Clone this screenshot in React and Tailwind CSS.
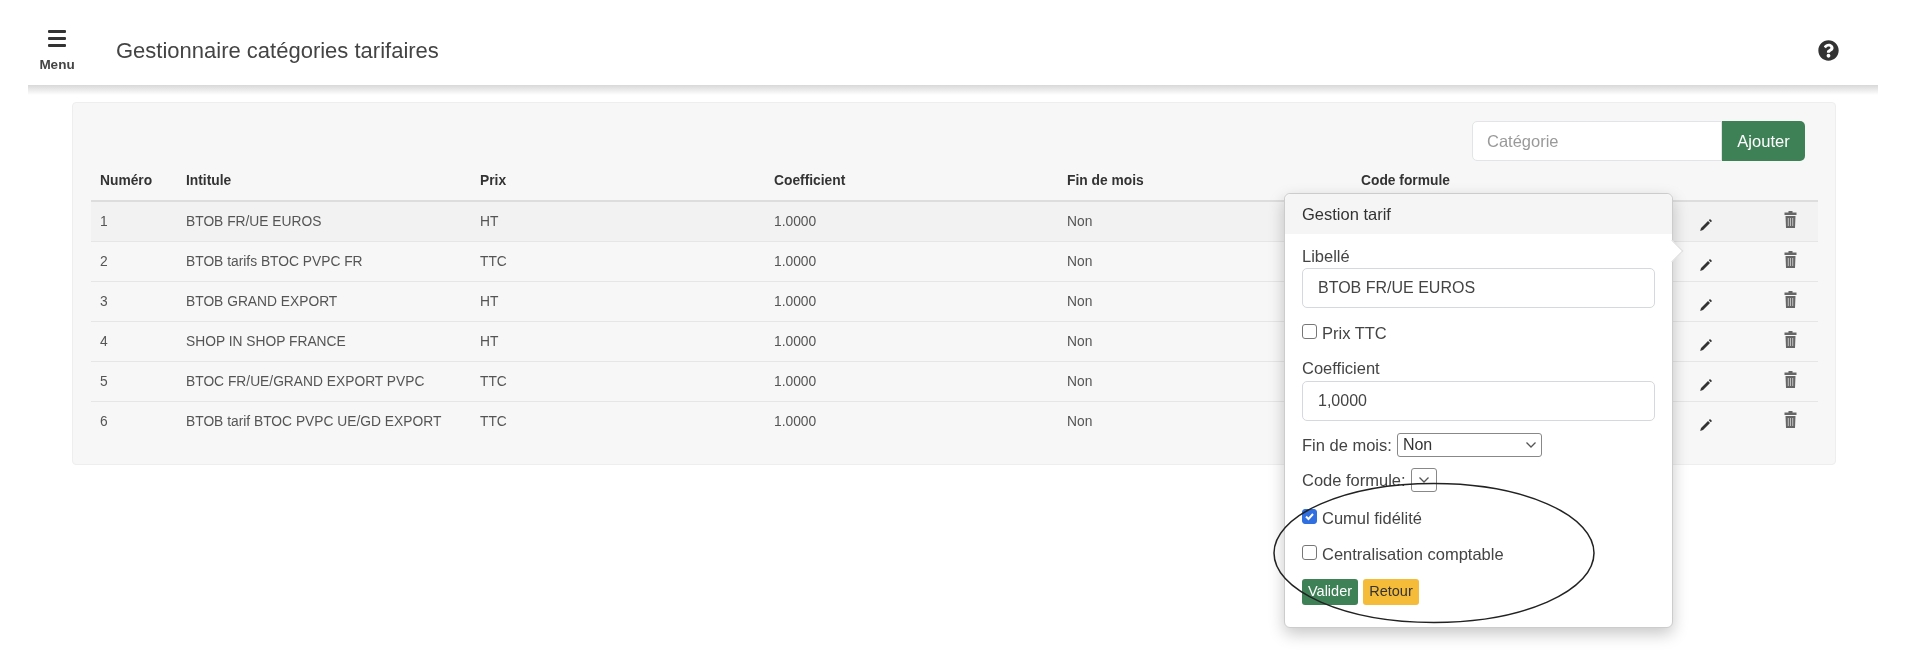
import { FaQuestionCircle } from 'react-icons/fa'

const ROWS = [
  { id: 1, name: 'BTOB FR/UE EUROS', price: 'HT' },
  { id: 2, name: 'BTOB tarifs BTOC PVPC FR', price: 'TTC' },
  { id: 3, name: 'BTOB GRAND EXPORT', price: 'HT' },
  { id: 4, name: 'SHOP IN SHOP FRANCE', price: 'HT' },
  { id: 5, name: 'BTOC FR/UE/GRAND EXPORT PVPC', price: 'TTC' },
  { id: 6, name: 'BTOB tarif BTOC PVPC UE/GD EXPORT', price: 'TTC' },
]

function MenuIcon() {
  return (
    <svg width="18" height="17" viewBox="0 0 18 17" fill="#333">
      <rect x="0" y="0" width="18" height="3" rx="1" />
      <rect x="0" y="7" width="18" height="3" rx="1" />
      <rect x="0" y="14" width="18" height="3" rx="1" />
    </svg>
  )
}

function PencilIcon() {
  return (
    <svg width="14" height="14" viewBox="0 0 14 14" className="inline-block mt-[7px]">
      <path d="M11 1l2 2-1.200 1.200-2-2zM9 2.900l2 2-7 7-2.800 1 .8-3z" fill="#333" />
    </svg>
  )
}

function TrashIcon() {
  return (
    <svg width="13" height="17" viewBox="0 0 13 17" className="inline-block -mt-[3px]">
      <path d="M4.500 0h4v1.500h4V4H.5V1.500h4zM1.500 5h10l-.5 12H2z" fill="#666" />
      <path d="M4.300 7v8M6.500 7v8M8.700 7v8" stroke="#ccc" strokeWidth="0.900" />
    </svg>
  )
}

function Chevron() {
  return (
    <svg width="12" height="8" viewBox="0 0 12 8" fill="none">
      <path d="M1.500 1.500L6 6l4.500-4.500" stroke="#555" strokeWidth="1.300" />
    </svg>
  )
}

function Checkbox({ checked }) {
  return (
    <span className={`-mt-[4px] w-[15px] h-[15px] rounded-[3px] border flex items-center justify-center shrink-0 ${checked ? 'bg-[#2f6fe0] border-[#2f6fe0]' : 'bg-white border-[#777]'}`}>
      {checked && (
        <svg width="11" height="11" viewBox="0 0 11 11" fill="none">
          <path d="M2 5.500l2.500 2.500L9 3" stroke="#fff" strokeWidth="2" />
        </svg>
      )}
    </span>
  )
}

function Popover() {
  return (
    <div className="absolute left-[1284px] top-[193px] w-[389px] h-[435px] bg-white rounded-[6px] border border-[#ccc] shadow-[0_6px_16px_rgba(0,0,0,0.22)] text-[16.500px] text-[#444]">
      <div className="h-[40px] px-[17px] flex items-center bg-[#f5f5f5] rounded-t-[6px] text-[#333]">Gestion tarif</div>
      <span className="absolute -right-[8px] top-[49px] w-[16px] h-[16px] rotate-45 bg-white border-t border-r border-[#ddd]" />
      <div className="relative px-[17px] flex flex-col">
        <label className="mt-[12px] leading-[20px]">Libellé</label>
        <div className="mt-[2px] h-[40px] rounded-[5px] border border-[#d5d8dc] flex items-center pl-[15px] text-[16px] text-[#444]">BTOB FR/UE EUROS</div>
        <div className="mt-[17px] flex items-center gap-[5px] h-[16px]"><Checkbox /><span>Prix TTC</span></div>
        <label className="mt-[17px] leading-[20px]">Coefficient</label>
        <div className="mt-[3px] h-[40px] rounded-[5px] border border-[#d5d8dc] flex items-center pl-[15px] text-[16px]">1,0000</div>
        <div className="mt-[12px] flex items-center gap-[5px] h-[24px]">
          <span>Fin de mois:</span>
          <div className="w-[145px] h-[24px] rounded-[3px] border border-[#888] flex items-center justify-between pl-[5px] pr-[4px] text-[16px] text-[#333]">Non<Chevron /></div>
        </div>
        <div className="mt-[11px] flex items-center gap-[5px] h-[24px]">
          <span>Code formule:</span>
          <div className="w-[26px] h-[24px] rounded-[3px] border border-[#888] flex items-center justify-center"><Chevron /></div>
        </div>
        <div className="mt-[18px] flex items-center gap-[5px] h-[16px]"><Checkbox checked /><span>Cumul fidélité</span></div>
        <div className="mt-[20px] flex items-center gap-[5px] h-[16px]"><Checkbox /><span>Centralisation comptable</span></div>
        <div className="mt-[17px] flex gap-[5px] text-[14.500px]">
          <button className="w-[56px] h-[26px] rounded-[3px] bg-[#3f8157] text-white">Valider</button>
          <button className="w-[56px] h-[26px] rounded-[3px] bg-[#f5bc3a] text-[#333]">Retour</button>
        </div>
      </div>
    </div>
  )
}

export default function App() {
  return (
    <div className="relative h-[668px] overflow-hidden bg-white font-['Liberation_Sans',Arial,sans-serif] blur-[0.7px]">
      {/* Top bar */}
      <header className="ml-[28px] w-[1850px] h-[85px] pt-[16px] flex items-center bg-white">
        <div className="w-[48px] ml-[5px] flex flex-col items-center mt-[1px]">
          <MenuIcon />
          <span className="text-[13.500px] font-bold leading-[16px] mt-[10px] text-[#444]">Menu</span>
        </div>
        <h1 className="ml-[35px] text-[22px] text-[#444] -mt-[1px]">Gestionnaire catégories tarifaires</h1>
        <FaQuestionCircle className="ml-auto mr-[39px] -mt-[1px] w-[21px] h-[21px] text-[#333]" />
      </header>
      <div className="ml-[28px] w-[1850px] h-[10px] bg-gradient-to-b from-[#d8d8d8] to-white" />

      {/* Card */}
      <main className="ml-[72px] mt-[7px] w-[1764px] h-[363px] bg-[#f7f7f7] border border-[#eee] rounded-[4px] pt-[18px] pl-[18px] pr-[17px]">
        <div className="flex justify-end pr-[13px]">
          <div className="w-[250px] h-[40px] bg-white border border-[#e2e4e7] rounded-l-[5px] flex items-center pl-[14px] text-[16.500px] text-[#9a9a9a]">Catégorie</div>
          <button className="w-[83px] h-[40px] bg-[#3f8157] text-white rounded-r-[5px] text-[16.500px]">Ajouter</button>
        </div>
        <table className="w-[1727px] table-fixed text-[13.800px] text-[#555]">
          <thead>
            <tr className="h-[40px] border-b-2 border-[#ddd] text-left text-[#333]">
              <th className="w-[86px] pl-[9px] pt-[2px] font-bold">Numéro</th>
              <th className="w-[294px] pl-[9px] pt-[2px] font-bold">Intitule</th>
              <th className="w-[294px] pl-[9px] pt-[2px] font-bold">Prix</th>
              <th className="w-[293px] pl-[9px] pt-[2px] font-bold">Coefficient</th>
              <th className="w-[294px] pl-[9px] pt-[2px] font-bold">Fin de mois</th>
              <th className="w-[328px] pl-[9px] pt-[2px] font-bold">Code formule</th>
              <th className="w-[82px]" />
              <th className="w-[56px]" />
            </tr>
          </thead>
          <tbody>
            {ROWS.map(row => (
              <tr key={row.id} className={`h-[40px] border-b border-[#e6e6e6] last:border-b-0 ${row.id === 1 ? 'bg-[#f2f2f2]' : ''}`}>
                <td className="pl-[9px] pt-[2px]">{row.id}</td>
                <td className="pl-[9px] pt-[2px]">{row.name}</td>
                <td className="pl-[9px] pt-[2px]">{row.price}</td>
                <td className="pl-[9px] pt-[2px]">1.0000</td>
                <td className="pl-[9px] pt-[2px]">Non</td>
                <td />
                <td className="pl-[19px]"><PencilIcon /></td>
                <td className="text-center"><TrashIcon /></td>
              </tr>
            ))}
          </tbody>
        </table>
      </main>

      <Popover />

      {/* Hand-drawn ellipse annotation */}
      <svg className="absolute left-[1270px] top-[480px]" width="328" height="146" viewBox="0 0 328 146" fill="none">
        <ellipse cx="164" cy="73" rx="160" ry="69.500" stroke="#222" strokeWidth="1.500" />
      </svg>
    </div>
  )
}
